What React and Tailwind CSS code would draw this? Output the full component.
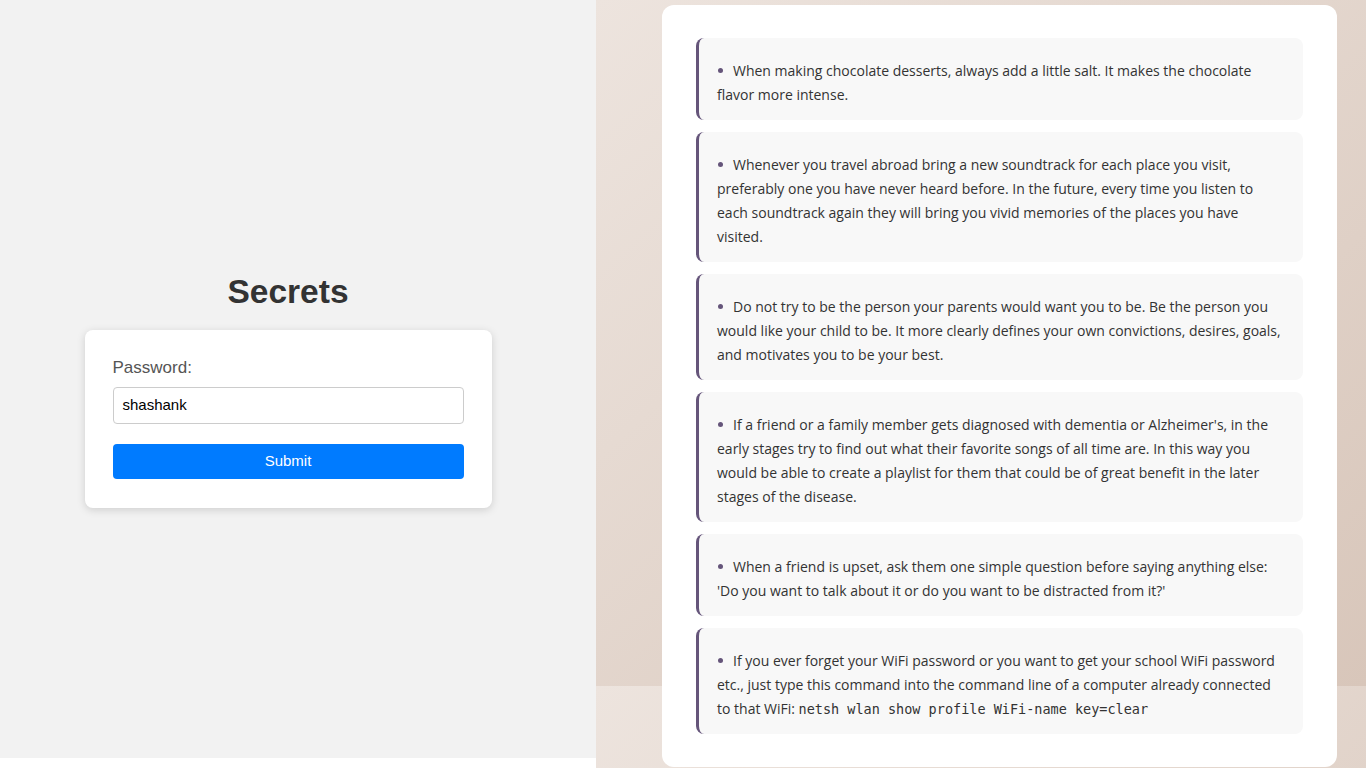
import React from "react";

const tips = [
  "When making chocolate desserts, always add a little salt. It makes the chocolate flavor more intense.",
  "Whenever you travel abroad bring a new soundtrack for each place you visit, preferably one you have never heard before. In the future, every time you listen to each soundtrack again they will bring you vivid memories of the places you have visited.",
  "Do not try to be the person your parents would want you to be. Be the person you would like your child to be. It more clearly defines your own convictions, desires, goals, and motivates you to be your best.",
  "If a friend or a family member gets diagnosed with dementia or Alzheimer's, in the early stages try to find out what their favorite songs of all time are. In this way you would be able to create a playlist for them that could be of great benefit in the later stages of the disease.",
  "When a friend is upset, ask them one simple question before saying anything else: 'Do you want to talk about it or do you want to be distracted from it?'",
  null,
];

function Tip({ children }) {
  return (
    <div className="rounded-[8px] border-l-[3px] border-[#65557a] bg-[#f8f8f8] pl-[18px] pr-[16px] pt-[21px] pb-[13px] text-[14px] leading-[24px] text-[#333]">
      <span className="ml-[1px] mr-[10px] inline-block h-[5px] w-[5px] rounded-full bg-[#65557a] align-[3px]"></span>
      {children}
    </div>
  );
}

export default function App() {
  return (
    <div className="flex min-h-[768px] w-[1366px] bg-white">
      <div className="h-[758px] w-[596px] bg-[#f2f2f2] flex flex-col items-center justify-center pr-[20px] font-['Liberation_Sans',Arial,sans-serif]">
        <h1 className="mt-[23px] mb-[20px] text-[33.5px] font-bold leading-[37px] text-[#333]">Secrets</h1>
        <div className="w-[407px] rounded-[8px] bg-white px-[28px] pt-[28px] pb-[29px] shadow-[0_2px_8px_rgba(0,0,0,0.15)]">
          <div className="text-[17px] leading-[20px] text-[#555]">Password:</div>
          <div className="mt-[9px] flex h-[37px] items-center rounded-[4px] border border-[#ccc] px-[9px] text-[15px] text-black">
            shashank
          </div>
          <div className="mt-[20px] flex h-[35px] items-center justify-center rounded-[4px] bg-[#007bff] text-[15px] text-white">
            Submit
          </div>
        </div>
      </div>
      <div className="flex-1 bg-[linear-gradient(to_bottom_right,#ede4de,#d8c6ba)] bg-[length:100%_686px] bg-repeat-y pl-[66px] pr-[29px] pt-[5px]">
        <div className="rounded-[12px] bg-white px-[34px] py-[33px] font-['Open_Sans',sans-serif]">
          <div className="flex flex-col gap-[12px]">
            {tips.map((t, i) =>
              t ? (
                <Tip key={i}>{t}</Tip>
              ) : (
                <Tip key={i}>
                  If you ever forget your WiFi password or you want to get your school WiFi password etc., just type this command into the command line of a computer already connected to that WiFi:{" "}
                  <code className="font-['DejaVu_Sans_Mono',monospace] text-[13.5px]">netsh wlan show profile WiFi-name key=clear</code>
                </Tip>
              )
            )}
          </div>
        </div>
      </div>
    </div>
  );
}
